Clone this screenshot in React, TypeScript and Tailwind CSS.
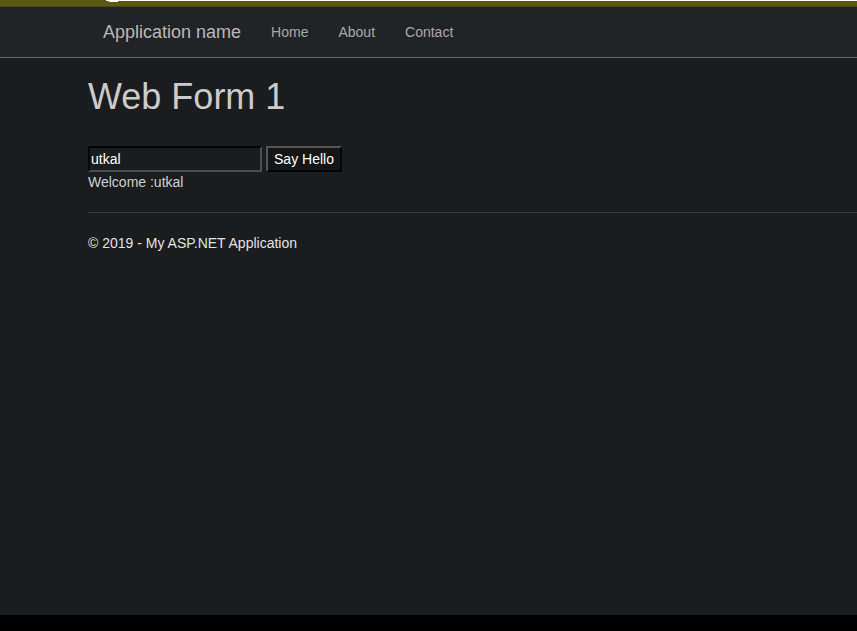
import React from "react";

export default function App() {
  return (
    <div className="flex h-[631px] w-full flex-col bg-black" style={{ fontFamily: '"Liberation Sans", Arial, sans-serif' }}>
      <div className="flex h-[615px] flex-col bg-[#1b1c1e]">
        <div className="relative h-[7px] shrink-0 bg-[#5b5912] border-b border-[#4a4810]">
          <div className="absolute left-[106px] right-0 top-0 h-px bg-white" />
          <div className="absolute left-[108px] top-0 h-[2px] w-[10px] rounded-bl-[4px] bg-white" />
        </div>
        <nav className="flex h-[51px] shrink-0 items-center border-b border-[#666666] bg-[#222326] pl-[103px]">
          <span className="text-[18px] text-[#b8b8b8]">Application name</span>
          <div className="ml-[30px] flex gap-[30px] text-[14px] text-[#a9a9a9]">
            <span>Home</span>
            <span>About</span>
            <span>Contact</span>
          </div>
        </nav>
        <main className="flex flex-col pl-[88px]">
          <h1 className="mt-[19px] text-[36px] leading-[40px] text-[#cbcbcb]">Web Form 1</h1>
          <div className="mt-[29px] flex items-center gap-[4px]">
            <div className="flex h-[26px] w-[174px] items-center border-2 border-t-[#050505] border-l-[#050505] border-b-[#4d4d4d] border-r-[#4d4d4d] bg-[#1b1c1e] pl-[1px] text-[14px] text-white">
              utkal
            </div>
            <div className="flex h-[26px] w-[76px] items-center justify-center border-2 border-t-[#555555] border-l-[#555555] border-b-[#050505] border-r-[#050505] bg-[#151515] text-[14px] text-white">
              Say Hello
            </div>
          </div>
          <div className="text-[14px] leading-[20px] text-[#d0d0d0]">Welcome :utkal</div>
          <div className="mt-[20px] h-px bg-[#37383a]" />
          <div className="mt-[20px] text-[14px] leading-[20px] text-[#e2e2e2]">© 2019 - My ASP.NET Application</div>
        </main>
      </div>
    </div>
  );
}
